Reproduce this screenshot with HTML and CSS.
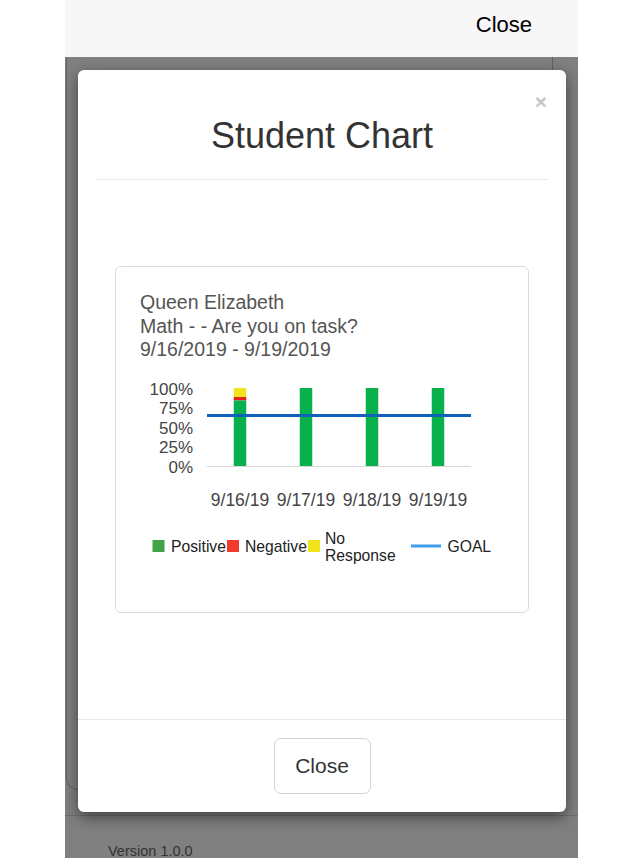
FILE: index.html
```html
<!DOCTYPE html>
<html>
<head>
<meta charset="utf-8">
<link rel="stylesheet" href="styles.css">
</head>
<body>
<div class="screen">
  <div class="topbar"><span class="top-close">Close</span></div>
  <div class="stage">
    <div class="under">
      <div class="bgcard"></div>
      <div class="bgline"></div>
      <div class="version">Version 1.0.0</div>
    </div>
    <div class="modal">
      <div class="modal-header">
        <span class="x">&times;</span>
        <h1 class="title">Student Chart</h1>
      </div>
      <div class="modal-body">
        <div class="card">
          <div class="heading">
            <div>Queen Elizabeth</div>
            <div>Math - - Are you on task?</div>
            <div>9/16/2019 - 9/19/2019</div>
          </div>
          <svg class="chart" width="412" height="228" viewBox="0 0 412 228">
            <g class="ylab" text-anchor="end">
              <text x="77" y="32.6">100%</text>
              <text x="77" y="52.1">75%</text>
              <text x="77" y="71.6">50%</text>
              <text x="77" y="91.1">25%</text>
              <text x="77" y="110.6">0%</text>
            </g>
            <line x1="91" y1="104.5" x2="355" y2="104.5" stroke="#d6d6d6" stroke-width="1"/>
            <rect x="117.75" y="26" width="12.5" height="9" fill="#f1e51f"/>
            <rect x="117.75" y="35" width="12.5" height="3.5" fill="#e0241b"/>
            <rect x="117.75" y="38.5" width="12.5" height="65.5" fill="#08b14c"/>
            <rect x="183.75" y="26" width="12.5" height="78" fill="#08b14c"/>
            <rect x="249.75" y="26" width="12.5" height="78" fill="#08b14c"/>
            <rect x="315.75" y="26" width="12.5" height="78" fill="#08b14c"/>
            <line x1="91" y1="53.5" x2="355" y2="53.5" stroke="#0e63b8" stroke-width="3"/>
            <g class="xlab" text-anchor="middle">
              <text x="124" y="144.3">9/16/19</text>
              <text x="190" y="144.3">9/17/19</text>
              <text x="256" y="144.3">9/18/19</text>
              <text x="322" y="144.3">9/19/19</text>
            </g>
            <rect x="36.5" y="178" width="12" height="12" fill="#43a447"/>
            <rect x="111" y="178" width="12" height="12" fill="#f0392f"/>
            <rect x="192" y="178" width="12" height="12" fill="#f0e51c"/>
            <line x1="295" y1="184" x2="325" y2="184" stroke="#3f9de9" stroke-width="3"/>
            <g class="leg">
              <text x="55" y="189.6">Positive</text>
              <text x="129" y="189.6">Negative</text>
              <text x="209" y="182">No</text>
              <text x="209" y="198.5">Response</text>
              <text x="331.5" y="189.6">GOAL</text>
            </g>
          </svg>
        </div>
      </div>
      <div class="modal-footer">
        <button class="btn">Close</button>
      </div>
    </div>
  </div>
</div>
</body>
</html>
```
FILE: styles.css
```css
* { box-sizing: border-box; }
html, body {
  margin: 0;
  padding: 0;
  background: #ffffff;
  font-family: "Liberation Sans", Arial, sans-serif;
}
.screen {
  width: 513px;
  height: 858px;
  margin-left: 65px;
  overflow: hidden;
}
.topbar {
  height: 57px;
  background: #f7f7f7;
  display: flex;
  justify-content: flex-end;
  align-items: flex-start;
  padding: 11.5px 46px 0 0;
}
.top-close {
  font-size: 22px;
  line-height: 26px;
  color: #000;
}
.stage {
  position: relative;
  height: 801px;
  background: #808080;
}
.under {
  display: flex;
  flex-direction: column;
}
.bgcard {
  margin-left: 1px;
  width: 487px;
  height: 733px;
  border: 1px solid #636363;
  border-top: none;
  border-radius: 0 0 12px 12px;
}
.bgline {
  margin-top: 25px;
  height: 1px;
  background: #6e6e6e;
}
.version {
  margin-top: 27px;
  padding-left: 43px;
  font-size: 14.5px;
  line-height: 17px;
  color: #333;
}
.modal {
  position: absolute;
  top: 13px;
  left: 13px;
  width: 488px;
  height: 742px;
  background: #fff;
  border-radius: 6px;
  box-shadow: 0 5px 15px rgba(0, 0, 0, 0.5);
  display: flex;
  flex-direction: column;
}
.modal-header {
  position: relative;
  margin: 0 18px;
  padding: 46px 0 23px;
  border-bottom: 1px solid #e8e8e8;
}
.x {
  position: absolute;
  top: 21px;
  right: 1px;
  font-size: 21px;
  font-weight: bold;
  line-height: 21px;
  color: #c6c6c6;
}
.title {
  margin: 0;
  text-align: center;
  font-size: 36px;
  font-weight: normal;
  line-height: 40px;
  color: #333;
}
.modal-body {
  flex: 1;
  padding: 86px 37px 0;
}
.card {
  border: 1px solid #dcdcdc;
  border-radius: 6px;
  padding: 24px 0 22.5px 24px;
  height: 347px;
}
.heading {
  font-size: 19.5px;
  line-height: 23.5px;
  color: #555;
}
.chart {
  display: block;
  margin-left: -24px;
  font-family: "Liberation Sans", Arial, sans-serif;
}
.ylab { font-size: 17px; fill: #444; }
.xlab { font-size: 17.5px; fill: #444; }
.leg { font-size: 15.7px; fill: #222; }
.modal-footer {
  border-top: 1px solid #e8e8e8;
  padding: 18px;
  display: flex;
  justify-content: center;
}
.btn {
  width: 97px;
  height: 56px;
  background: #fff;
  border: 1px solid #d3d3d3;
  border-radius: 7px;
  font-family: "Liberation Sans", Arial, sans-serif;
  font-size: 21px;
  color: #333;
  padding: 0;
}
```
